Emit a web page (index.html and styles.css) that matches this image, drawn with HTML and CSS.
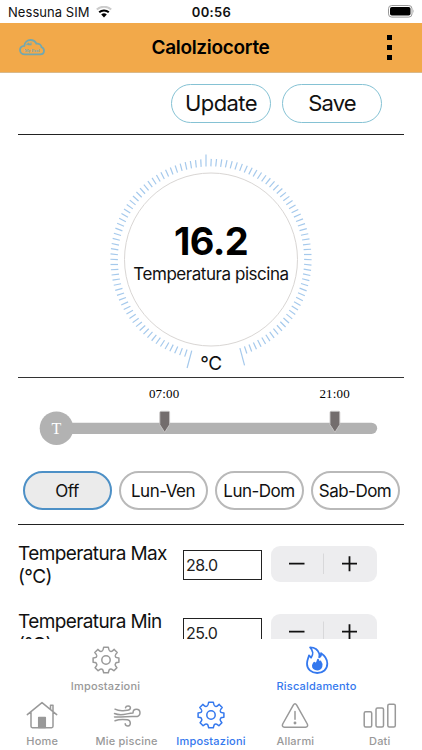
FILE: index.html
```html
<!DOCTYPE html>
<html lang="it">
<head>
  <meta charset="UTF-8">
  <meta name="viewport" content="width=device-width, initial-scale=1.0">
  <title>Calolziocorte</title>
  <link rel="stylesheet" href="styles.css">
</head>
<body>
  <!-- Status bar -->
  <div class="status-bar">
    <div class="carrier">
      <span>Nessuna SIM</span>
      <svg width="16" height="12" viewBox="0 0 16 12">
        <path d="M0.8 3.6a10.5 10.5 0 0 1 14.4 0" fill="none" stroke="#ccc" stroke-width="2"/>
        <path d="M3.2 6.3a7 7 0 0 1 9.6 0" fill="none" stroke="#000" stroke-width="2"/>
        <path d="M5.2 8.6a4 4 0 0 1 5.6 0L8 11.4z" fill="#000"/>
      </svg>
    </div>
    <div class="clock">00:56</div>
    <div class="battery">
      <svg width="27" height="13" viewBox="0 0 27 13">
        <rect x="0.5" y="0.5" width="23.5" height="11.6" rx="3.2" fill="none" stroke="#999"/>
        <rect x="2" y="2" width="20.5" height="8.6" rx="1.8"/>
        <path d="M25.2 4.3q1.3 2 0 4z" fill="#999"/>
      </svg>
    </div>
  </div>

  <!-- Header -->
  <div class="header">
    <svg class="logo" width="26" height="18" viewBox="0 0 26 18" fill="none" stroke="#72a8b0">
      <path d="M6 15.4C2.8 15.4 1 13.3 1 11c0-2.2 1.7-4 4.3-4.2C5.7 3.5 8.300 1 11.500 1c2.800 0 4.800 1.500 5.900 3.700 2.700-.5 4.800 1.100 5.100 3.500 1.600.6 2.500 2 2.500 3.600 0 2.100-1.700 3.600-3.900 3.600z" stroke-width="1.800"/>
      <path d="M7.500 6l2-1.700 1.200 1M9 5.600h3V3.500" stroke-width="1.100"/>
      <text x="5.400" y="13.300" class="logo-text">My Pool</text>
    </svg>
    <h1>Calolziocorte</h1>
    <div class="more"><i></i><i></i><i></i></div>
  </div>

  <!-- Page content -->
  <div class="content">
    <div class="actions">
      <button class="action-button update">Update</button>
      <button class="action-button save">Save</button>
    </div>

    <div class="gauge">
      <svg width="220" height="242" viewBox="-110 -124.500 220 242">
        <circle r="86.500" fill="none" stroke="#d9d6d4"/>
        <g id="ticks" stroke="#a5c9ec" stroke-width="1.200"></g>
      </svg>
      <div class="gauge-text">
        <div class="gauge-value">16.2</div>
        <div class="gauge-label">Temperatura piscina</div>
        <div class="gauge-unit">°C</div>
      </div>
    </div>

    <div class="timeline">
      <svg width="386" height="93" viewBox="18 378 386 93">
        <path d="M60 428.300h311.500" stroke="#b2b2b2" stroke-width="11.300" stroke-linecap="round"/>
        <circle cx="56.500" cy="428.200" r="16.800" fill="#b2b2b2"/>
        <text x="56.300" y="433.500" fill="#fff" class="knob">T</text>
        <g fill="#736d6d" stroke="#c9c7c7" stroke-width="0.900">
          <path d="M161 411.300h7.400a1.200 1.200 0 0 1 1.200 1.200v12.200l-4.900 7.600-4.900-7.600v-12.200a1.200 1.200 0 0 1 1.200-1.200z"/>
          <path d="M331.200 411.300h7.400a1.200 1.200 0 0 1 1.200 1.200v12.200l-4.900 7.600-4.900-7.600v-12.200a1.200 1.200 0 0 1 1.200-1.200z"/>
        </g>
        <text x="164.200" y="397.800" class="hour">07:00</text>
        <text x="334.700" y="397.800" class="hour">21:00</text>
      </svg>
    </div>

    <div class="days">
      <button class="day active">Off</button>
      <button class="day">Lun-Ven</button>
      <button class="day">Lun-Dom</button>
      <button class="day">Sab-Dom</button>
    </div>

    <div class="settings">
      <div class="setting">
        <label for="tmax">Temperatura Max (°C)</label>
        <input type="text" id="tmax" value="28.0">
        <div class="stepper">
          <svg width="106" height="36" viewBox="0 0 106 36">
            <path d="M18 17.700h15.500M71 17.700h15M78.500 10.200v15" stroke="#111" stroke-width="1.800"/>
            <path d="M52.500 7.500v20.500" stroke="#d8d8da"/>
          </svg>
        </div>
      </div>
      <div class="setting">
        <label for="tmin">Temperatura Min (°C)</label>
        <input type="text" id="tmin" value="25.0">
        <div class="stepper">
          <svg width="106" height="36" viewBox="0 0 106 36">
            <path d="M18 17.700h15.500M71 17.700h15M78.500 10.200v15" stroke="#111" stroke-width="1.800"/>
            <path d="M52.500 7.500v20.500" stroke="#d8d8da"/>
          </svg>
        </div>
      </div>
    </div>
  </div>

  <!-- Bottom tabs -->
  <svg class="defs" width="0" height="0">
    <symbol id="gear" viewBox="-14 -14 28 28">
      <path d="M-2.300 -12.800H2.300Q3 -9.300 3.600 -9.100L5.200 -8.400Q6 -8.400 8.200 -10.600L11.200 -7.500Q9 -5 9.200 -4.300L9.800 -2.700Q10.200 -2.300 12.900 -2V2.300Q10.200 2.500 9.800 3L9.100 4.700Q9 5.400 10.900 7.700L7.900 10.800Q5.700 8.800 5 8.900L3.400 9.500Q3 10 2.300 12.800H-2.300Q-3 10 -3.400 9.500L-5 8.900Q-5.700 8.800 -7.900 10.800L-10.900 7.700Q-9 5.400 -9.100 4.700L-9.800 3Q-10.200 2.500 -12.900 2.300V-2Q-10.200 -2.300 -9.800 -2.700L-9.200 -4.300Q-9 -5 -11.200 -7.500L-8.200 -10.600Q-6 -8.400 -5.200 -8.400L-3.600 -9.100Q-3 -9.300 -2.300 -12.800Z"/>
      <circle r="4.200"/>
    </symbol>
  </svg>
  <div class="tabs sub-tabs">
    <a class="tab">
      <svg class="icon" width="28" height="28"><use href="#gear"/></svg>
      <span>Impostazioni</span>
    </a>
    <a class="tab active">
      <svg class="icon flame" width="28" height="28" viewBox="0 0 28 28">
        <path d="M7.100 1.300C11 1.300 14.900 3.400 16.200 7.500 16.700 9 16.500 10.200 16.200 11.300 17.600 10.600 18.400 9 18.100 7.200 21.500 9.500 24.300 13 24.300 17.500 24.300 23.500 20 27 14.200 27 8.300 27 4 23.200 4 17.800 4 13.800 5.600 11.600 6 9.400L8.100 11.700C10.500 8.500 10 4.300 7.100 1.300Z"/>
        <path class="solid" d="M15 13.700C15.400 16.400 17.300 16.600 17.300 15.300 18.800 17.200 19 19 18.400 20.800 17.700 22.700 16 23.600 14.200 23.600 11.400 23.600 9.700 21.700 9.900 19.500 10 18.400 10.600 17.500 11.200 16.700L12.400 17.800C13.800 17 14.700 15.700 15 13.700Z"/>
      </svg>
      <span>Riscaldamento</span>
    </a>
  </div>
  <div class="tabs main-tabs">
    <a class="tab">
      <svg class="icon" width="32" height="28" viewBox="0 0 32 28">
        <path d="M1.300 13.600L16 1.600L30.700 13.600M5 11V25.300Q5 26.700 6.400 26.700H25.600Q27 26.700 27 25.300V11M24.500 8V4.200H27V10"/>
        <path class="solid" d="M12.700 26.500V16.600H19.300V26.500Z"/>
      </svg>
      <span>Home</span>
    </a>
    <a class="tab">
      <svg class="icon" width="28" height="28" viewBox="0 0 28 28">
        <path d="M2 8.200C7 10.800 11 9.400 14.500 9.300 17.800 9.200 18.600 5.200 15.300 4.900 13.800 4.800 12.800 5.500 12.500 6.700M1.500 12.500C9 15.800 14 12 20 11.900M20 11.900C20 9.500 21.500 8.300 23.400 8.300 25.600 8.300 27 9.800 27 12 27 14.500 24.800 15.800 22 15.500 16 15 10 16.200 1.500 15.900M2 19.700C7 17.800 11 18.300 14.500 18.800 18 19.400 18.300 24.800 15 25 13.300 25.100 12.200 24 12.200 22.700"/>
      </svg>
      <span>Mie piscine</span>
    </a>
    <a class="tab active">
      <svg class="icon" width="28" height="28"><use href="#gear"/></svg>
      <span>Impostazioni</span>
    </a>
    <a class="tab">
      <svg class="icon" width="28" height="28" viewBox="0 0 28 28">
        <path d="M12.300 4.200Q14 1.500 15.700 4.200L26.300 23Q27.500 25.900 24.500 26.200H3.500Q.5 25.900 1.700 23ZM14 10.500V18.300"/>
        <circle class="solid" cx="14" cy="22" r=".7"/>
      </svg>
      <span>Allarmi</span>
    </a>
    <a class="tab">
      <svg class="icon" width="34" height="28" viewBox="0 0 34 28">
        <rect x="1.200" y="10.800" width="7.500" height="15.200" rx="1.500"/>
        <rect x="13" y="7" width="7.500" height="19" rx="1.500"/>
        <rect x="24.800" y="3.200" width="7.500" height="22.800" rx="1.500"/>
      </svg>
      <span>Dati</span>
    </a>
  </div>

  <script>
    // Dial ticks, one every 3 degrees, longer at the top and at both ends
    const ticks = document.getElementById('ticks');
    for (let a = -165; a <= 165; a += 3) {
      const line = document.createElementNS('http://www.w3.org/2000/svg', 'line');
      const outer = Math.abs(a) === 165 ? 111 : a === 0 ? 105 : 100.5;
      line.setAttribute('x1', -5);
      line.setAttribute('x2', -5);
      line.setAttribute('y1', -93);
      line.setAttribute('y2', -outer);
      line.setAttribute('transform', `rotate(${a})`);
      ticks.appendChild(line);
    }
  </script>
</body>
</html>
```
FILE: styles.css
```css
* {
  margin: 0;
  padding: 0;
  box-sizing: border-box;
}
body {
  font-family: Inter, "Liberation Sans", sans-serif;
  background-color: #fff;
  color: #111;
  display: flex;
  flex-direction: column;
  height: 750px;
  overflow: hidden;
}
button {
  font-family: inherit;
  color: #111;
  background-color: #fff;
}
svg {
  display: block;
  flex: none;
}
.status-bar {
  height: 23px;
  flex: none;
  display: grid;
  grid-template-columns: 1fr auto 1fr;
  align-items: center;
  padding: 0 7px 0 8px;
  font-size: 13px;
}
.carrier {
  display: flex;
  align-items: center;
  gap: 6px;
  letter-spacing: 0.05px;
}
.clock {
  font-weight: 600;
  letter-spacing: 0.3px;
}
.battery {
  justify-self: end;
}
.header {
  height: 50px;
  flex: none;
  display: grid;
  grid-template-columns: 1fr auto 1fr;
  align-items: center;
  padding: 0 30px 0 19px;
  background-color: #f2a94a;
  border-bottom: 1px solid #d9b98a;
}
.logo-text {
  font-size: 4.2px;
  font-weight: 700;
  font-family: "Liberation Serif", serif;
  fill: #72a8b0;
  stroke: none;
}
.header h1 {
  font-size: 19px;
  font-weight: 600;
  letter-spacing: -0.3px;
  color: #000;
  margin-left: 10px;
}
.more {
  justify-self: end;
  display: flex;
  flex-direction: column;
  gap: 5px;
}
.more i {
  width: 5px;
  height: 5px;
  background-color: #000;
}
.content {
  flex: 1;
  min-height: 0;
  overflow: hidden;
  padding: 0 18px;
}
.actions {
  height: 62px;
  display: flex;
  justify-content: flex-end;
  gap: 11px;
  padding: 10.5px 22px 0 0;
  border-bottom: 1px solid #222;
}
.action-button {
  width: 100px;
  height: 39px;
  border: 1.5px solid #85c2d4;
  border-radius: 20px;
  font-size: 22px;
  letter-spacing: -0.6px;
}
.save {
  letter-spacing: -0.9px;
}
.gauge {
  height: 243px;
  display: grid;
  justify-items: center;
  border-bottom: 1px solid #333;
}
.gauge svg,
.gauge-text {
  grid-area: 1 / 1;
}
.gauge-text {
  text-align: center;
  padding-top: 83px;
}
.gauge-value {
  font-size: 38px;
  line-height: 46px;
  font-weight: 700;
  letter-spacing: -0.6px;
  color: #000;
}
.gauge-label {
  font-size: 17px;
  line-height: 20px;
  letter-spacing: -0.45px;
}
.gauge-unit {
  font-size: 19px;
  line-height: 22px;
  margin-top: 69px;
  letter-spacing: -0.3px;
}
.timeline {
  height: 93px;
}
.knob,
.hour {
  font-family: "Liberation Serif", serif;
  text-anchor: middle;
}
.knob {
  font-size: 16px;
}
.hour {
  font-size: 13px;
  letter-spacing: 0.2px;
}
.days {
  height: 54px;
  display: flex;
  gap: 7px;
  padding: 0 4.5px;
  border-bottom: 1px solid #222;
}
.day {
  width: 89px;
  height: 39px;
  flex: none;
  border: 2px solid #b9b9b9;
  border-radius: 20px;
  font-size: 17px;
  letter-spacing: -0.5px;
}
.day.active {
  background-color: #ebebeb;
  border-color: #4d90c6;
}
.settings {
  padding-top: 17px;
}
.setting {
  height: 68px;
  display: flex;
  align-items: flex-start;
}
.setting label {
  width: 165px;
  padding-right: 10px;
  font-size: 19px;
  line-height: 23px;
  letter-spacing: -0.6px;
}
.setting input {
  width: 79px;
  height: 30px;
  margin: 8px 9px 0 0;
  padding: 0 2px;
  border: 1px solid #222;
  font-family: inherit;
  font-size: 16px;
  letter-spacing: -0.5px;
  color: #222;
}
.stepper {
  width: 106px;
  height: 36px;
  margin-top: 4px;
  background-color: #ededef;
  border-radius: 9px;
}
.defs {
  position: absolute;
}
.tabs {
  flex: none;
  display: grid;
  background-color: #fff;
}
.sub-tabs {
  height: 56px;
  grid-template-columns: 1fr 1fr;
  padding-top: 7px;
}
.main-tabs {
  height: 55px;
  grid-template-columns: repeat(5, 1fr);
  padding-top: 6px;
}
.tab {
  display: flex;
  flex-direction: column;
  align-items: center;
  gap: 5px;
  font-size: 11px;
  line-height: 15px;
  font-weight: 500;
  white-space: nowrap;
  letter-spacing: 0.2px;
  color: #999;
}
.tab.active {
  color: #3478ee;
}
.icon {
  fill: none;
  stroke: currentColor;
  stroke-width: 1.5;
  stroke-linejoin: round;
  stroke-linecap: round;
}
.flame {
  stroke-width: 1.8;
}
.solid {
  fill: currentColor;
}
```
